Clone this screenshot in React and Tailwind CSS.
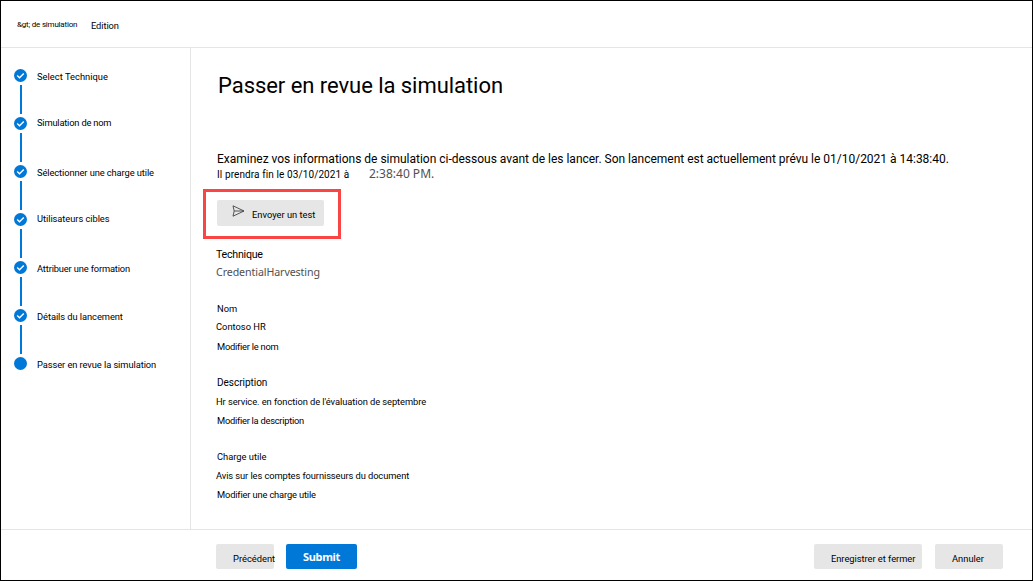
const steps = [
  { label: 'Select Technique', cls: 'mt-[2px] tracking-[0.02px]' },
  { label: 'Simulation de nom', cls: 'tracking-[-0.2px]' },
  { label: 'Sélectionner une charge utile', cls: 'mt-[2px] tracking-[-0.1px]' },
  { label: 'Utilisateurs cibles', cls: 'tracking-[-0.06px]' },
  { label: 'Attribuer une formation', cls: 'mt-[2px] tracking-[-0.16px]' },
  { label: 'Détails du lancement', cls: 'mt-[2px] tracking-[-0.07px]' },
  { label: 'Passer en revue la simulation', cls: 'mt-[2px] tracking-[-0.08px]' },
];

function StepMark({ done }) {
  return (
    <svg className="block h-[13px] w-[13px] shrink-0" viewBox="0 0 13 13">
      <circle cx="6.5" cy="6.5" r="6.5" fill="#0078d7" />
      {done && <path d="M3.2 6.6 5.5 8.7 9.8 4.5" fill="none" stroke="#fff" strokeWidth="1.4" />}
    </svg>
  );
}

function Step({ label, cls, last }) {
  return (
    <li className="flex h-[48px] gap-[10px]">
      <div className="flex w-[13px] shrink-0 flex-col items-center gap-[3px]">
        <StepMark done={!last} />
        {!last && <span className="ml-px h-[29px] w-[2px] bg-[#0078d7]" />}
      </div>
      <span className={`h-[12px] ${cls}`}>{label}</span>
    </li>
  );
}

function SendIcon() {
  return (
    <svg className="block h-[12px] w-[13px]" viewBox="0 0 13 12" fill="none" stroke="#444" strokeWidth="0.9">
      <path d="M1 .8 12 6 1 11.2 2.2 6ZM2.2 6H12" />
    </svg>
  );
}

export default function App() {
  return (
    <div className="flex h-[581px] w-[1033px] flex-col overflow-hidden border border-black bg-white font-['Roboto',sans-serif] text-[9.33px] leading-[12px] whitespace-nowrap text-black">
      <header className="flex h-[47px] shrink-0 items-start border-b border-[#e5e5e5] pl-4">
        <span className="mt-[18px] w-[74px] text-[8px] tracking-[-0.2px]">&amp;gt; de simulation</span>
        <span className="mt-[19px] tracking-[-0.1px]">Edition</span>
      </header>

      <div className="flex h-[481px] shrink-0">
        <ol className="w-[190px] shrink-0 border-r border-[#e5e5e5] pt-[21px] pl-[13px]">
          {steps.map((s, i) => (
            <Step key={s.label} {...s} last={i === steps.length - 1} />
          ))}
        </ol>

        <main className="flex flex-col items-start pl-[26px]">
          <h1 className="mt-[24px] ml-px h-[28px] text-[22px] leading-[28px] tracking-[-0.05px]">Passer en revue la simulation</h1>
          <p className="mt-[51px] h-[16px] text-[12px] leading-[16px] tracking-[-0.01px]">
            Examinez vos informations de simulation ci-dessous avant de les lancer. Son lancement est actuellement prévu le 01/10/2021 à 14:38:40.
          </p>
          <div className="flex h-[16px] items-start">
            <span className="mt-px w-[152px] text-[10px] leading-[14px] tracking-[0.1px]">Il prendra fin le 03/10/2021 à</span>
            <span className="font-['Noto_Sans',sans-serif] text-[12px] leading-[14px] text-[#505050]">2:38:40 PM.</span>
          </div>

          <div className="-ml-[14px] mt-[6px] flex h-[50px] w-[138px] items-start border-[3px] border-[#fa4545] pt-[8px] pl-[11px]">
            <button className="flex h-[26px] w-[107px] items-start rounded-[2px] bg-[#e6e6e6] pl-[15px]">
              <span className="mt-[5px]"><SendIcon /></span>
              <span className="mt-[9px] ml-[7px]">Envoyer un test</span>
            </button>
          </div>

          <section className="-ml-px mt-[9px]">
            <h2 className="text-[10.67px] leading-[14px] tracking-[-0.25px]">Technique</h2>
            <p className="mt-[2px] font-['Noto_Sans',sans-serif] text-[10.67px] leading-[16px] tracking-[-0.1px] text-[#505050]">CredentialHarvesting</p>
          </section>

          <section className="mt-[23px]">
            <h2>Nom</h2>
            <p className="-ml-px mt-[6px]">Contoso HR</p>
            <p className="mt-[8px] tracking-[-0.24px]">Modifier le nom</p>
          </section>

          <section className="mt-[24px]">
            <h2 className="text-[10px] tracking-[-0.03px]">Description</h2>
            <p className="-ml-px mt-[7px] tracking-[-0.07px]">Hr service. en fonction de l'évaluation de septembre</p>
            <p className="mt-[7px] tracking-[-0.26px]">Modifier la description</p>
          </section>

          <section className="mt-[24px]">
            <h2>Charge utile</h2>
            <p className="-ml-px mt-[7px] tracking-[-0.09px]">Avis sur les comptes fournisseurs du document</p>
            <p className="mt-[7px] tracking-[-0.16px]">Modifier une charge utile</p>
          </section>
        </main>
      </div>

      <footer className="flex h-[51px] shrink-0 items-start border-t border-[#e5e5e5] pt-[14px] pl-[215px]">
        <button className="h-[25px] w-[58px] rounded-[2px] bg-[#e6e6e6] pt-[5px] pl-[17px] text-left">Précédent</button>
        <button className="ml-[12px] h-[25px] w-[71px] rounded-[2px] bg-[#0078d7] pt-px font-['Noto_Sans',sans-serif] text-[11px] tracking-[-0.3px] font-bold text-white">Submit</button>
        <button className="ml-[457px] h-[25px] w-[108px] rounded-[2px] bg-[#e6e6e6] pt-[5px] pl-[17px] text-left tracking-[-0.04px]">Enregistrer et fermer</button>
        <button className="ml-[13px] h-[25px] w-[68px] rounded-[2px] bg-[#e6e6e6] pt-[5px] pl-[17px] text-left">Annuler</button>
      </footer>
    </div>
  );
}
